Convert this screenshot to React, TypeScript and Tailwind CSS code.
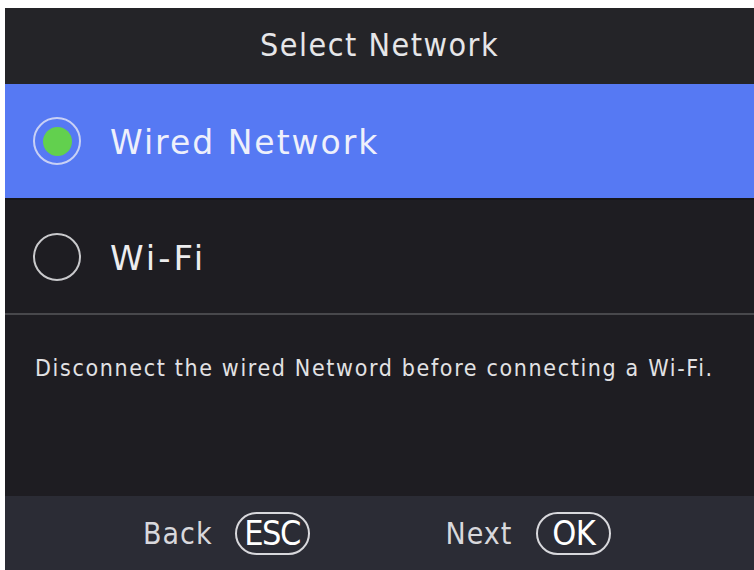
export default function App() {
  const cond = { fontFamily: '"DejaVu Sans Condensed", "DejaVu Sans", sans-serif' };
  return (
    <div className="w-[754px] h-[570px] bg-white pt-[8px] pl-[5px] overflow-hidden">
      <div className="flex flex-col h-full bg-[#1e1d22]">
        <div
          className="h-[76px] shrink-0 bg-[#242428] flex items-center justify-center text-[32px] tracking-[1.5px] text-[#e6e6e8] pb-[2px]"
          style={cond}
        >
          Select Network
        </div>

        <div className="h-[114px] shrink-0 bg-[#5679f3] flex items-center pl-[28px] gap-[29px]">
          <span className="w-[48px] h-[48px] rounded-full border-2 border-[#c8d0f5] flex items-center justify-center">
            <span className="w-[29px] h-[29px] rounded-full bg-[#62d04e]" />
          </span>
          <span className="text-[33px] tracking-[2px] text-[#eef0fb] font-['DejaVu_Sans',sans-serif] pt-[4px]">
            Wired Network
          </span>
        </div>
        <div className="h-[2px] shrink-0 bg-[#16161a]" />

        <div className="h-[113px] shrink-0 flex items-center pl-[28px] gap-[29px]">
          <span className="w-[48px] h-[48px] rounded-full border-2 border-[#c9c9cc]" />
          <span className="text-[34px] tracking-[3px] text-[#ececee] font-['DejaVu_Sans',sans-serif] pt-[4px]">
            Wi-Fi
          </span>
        </div>
        <div className="h-[2px] shrink-0 bg-[#48484c]" />

        <div className="flex-1 pt-[36px] pl-[30px]">
          <p className="text-[23px] tracking-[1.65px] text-[#e2e2e4] whitespace-nowrap" style={cond}>
            Disconnect the wired Netword before connecting a Wi-Fi.
          </p>
        </div>

        <div
          className="h-[74px] shrink-0 bg-[#2b2c35] flex items-center text-[30px] tracking-[1px] text-[#d8d8dc]"
          style={cond}
        >
          <div className="flex items-center gap-[22px] ml-[138px]">
            <span>Back</span>
            <span className="w-[75px] h-[43px] rounded-full border-2 border-[#d8d8dc] flex items-center justify-center text-[34px] tracking-[-1.5px] text-white">
              ESC
            </span>
          </div>
          <div className="flex items-center gap-[24px] ml-[136px]">
            <span>Next</span>
            <span className="w-[75px] h-[43px] rounded-full border-2 border-[#d8d8dc] flex items-center justify-center text-[34px] tracking-[-0.5px] text-white">
              OK
            </span>
          </div>
        </div>
      </div>
    </div>
  );
}
